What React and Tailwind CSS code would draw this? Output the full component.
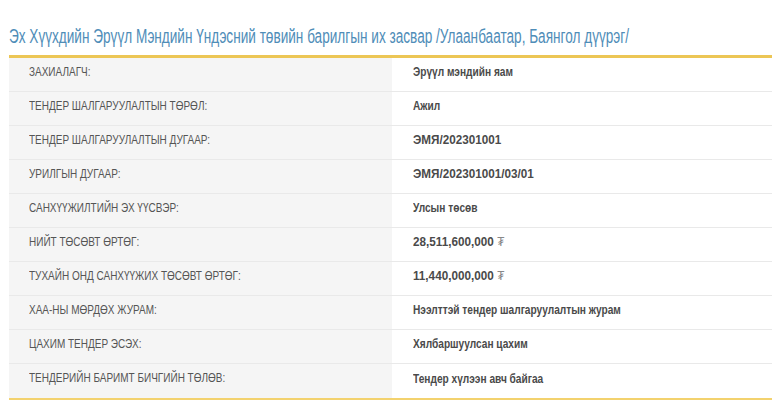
const rows = [
  ['ЗАХИАЛАГЧ:', 'Эрүүл мэндийн яам'],
  ['ТЕНДЕР ШАЛГАРУУЛАЛТЫН ТӨРӨЛ:', 'Ажил'],
  ['ТЕНДЕР ШАЛГАРУУЛАЛТЫН ДУГААР:', 'ЭМЯ/202301001', false, true],
  ['УРИЛГЫН ДУГААР:', 'ЭМЯ/202301001/03/01', false, true],
  ['САНХҮҮЖИЛТИЙН ЭХ ҮҮСВЭР:', 'Улсын төсөв'],
  ['НИЙТ ТӨСӨВТ ӨРТӨГ:', '28,511,600,000', true, true],
  ['ТУХАЙН ОНД САНХҮҮЖИХ ТӨСӨВТ ӨРТӨГ:', '11,440,000,000', true, true],
  ['ХАА-НЫ МӨРДӨХ ЖУРАМ:', 'Нээлттэй тендер шалгаруулалтын журам'],
  ['ЦАХИМ ТЕНДЕР ЭСЭХ:', 'Хялбаршуулсан цахим'],
  ['ТЕНДЕРИЙН БАРИМТ БИЧГИЙН ТӨЛӨВ:', 'Тендер хүлээн авч байгаа'],
];

// the page font is a narrow one; Liberation Sans is squeezed to get close
export default function App() {
  return (
    <div className="w-[772px] h-[413px] overflow-hidden bg-white pl-[9px] pt-[24px] font-['Liberation_Sans',Arial,sans-serif]">
      <h1 className="text-[20px] leading-[24px] text-[#4f8db8] whitespace-nowrap">
        <span className="inline-block origin-left scale-x-[0.68]">
          Эх Хүүхдийн Эрүүл Мэндийн Үндэсний төвийн барилгын их засвар /Улаанбаатар, Баянгол дүүрэг/
        </span>
      </h1>

      <div className="mt-[7px] w-[766px] border-t-[3px] border-b-2 border-t-[#ecc655] border-b-[#f3d26e]">
        {rows.map(([label, value, money, digits], i) => (
          <div key={i} className={`flex h-[34px] ${i < rows.length - 1 ? 'border-b border-[#e9e9e9]' : ''}`}>
            <div className="w-1/2 bg-[#f5f5f5] pl-5 pb-[5px] flex items-center whitespace-nowrap text-[13.5px] text-[#555]">
              <span className="inline-block origin-left scale-x-[0.74]">{label}</span>
            </div>
            <div className="w-1/2 pl-[21px] pb-[5px] flex items-center whitespace-nowrap text-[13px] font-bold text-[#4a4a4a]">
              <span className={`inline-block origin-left ${digits ? 'scale-x-[0.9]' : 'scale-x-[0.78]'}`}>
                {value}
                {money && <span className="ml-1 font-normal text-[#888]">₮</span>}
              </span>
            </div>
          </div>
        ))}
      </div>
    </div>
  );
}
